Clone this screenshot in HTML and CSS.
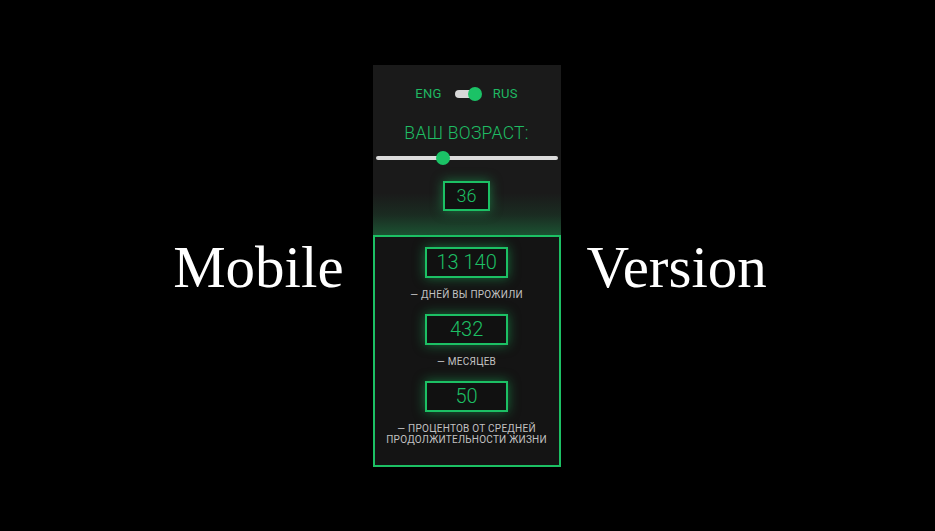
FILE: index.html
```html
<!DOCTYPE html>
<html lang="ru">
<head>
<meta charset="utf-8">
<title>Mobile Version</title>
<link rel="stylesheet" href="styles.css">
</head>
<body>
<main class="stage">
  <span class="caption caption-left">Mobile</span>
  <div class="phone">
    <section class="settings">
      <div class="lang">
        <span class="lang-label">ENG</span>
        <span class="switch"><span class="switch-track"></span><span class="switch-knob"></span></span>
        <span class="lang-label">RUS</span>
      </div>
      <h1 class="title">ВАШ ВОЗРАСТ:</h1>
      <div class="slider"><span class="slider-track"></span><span class="slider-thumb"></span></div>
      <div class="box box-age">36</div>
    </section>
    <section class="results">
      <div class="result">
        <div class="box box-wide">13 140</div>
        <p class="label">— ДНЕЙ ВЫ ПРОЖИЛИ</p>
      </div>
      <div class="result">
        <div class="box box-wide">432</div>
        <p class="label">— МЕСЯЦЕВ</p>
      </div>
      <div class="result">
        <div class="box box-wide">50</div>
        <p class="label">— ПРОЦЕНТОВ ОТ СРЕДНЕЙ<br>ПРОДОЛЖИТЕЛЬНОСТИ ЖИЗНИ</p>
      </div>
    </section>
  </div>
  <span class="caption caption-right">Version</span>
</main>
</body>
</html>
```
FILE: styles.css
```css
html, body {
  margin: 0;
  padding: 0;
  background: #000;
}
.stage {
  width: 935px;
  height: 531px;
  box-sizing: border-box;
  padding-left: 5px;
  display: flex;
  align-items: center;
  justify-content: center;
}
.caption {
  font-family: "Liberation Serif", "Times New Roman", serif;
  font-size: 59px;
  color: #fff;
  line-height: 1;
  padding-top: 3px;
}
.caption-left { margin-right: 29px; }
.caption-right { margin-left: 26px; }
.phone {
  width: 188px;
  height: 402px;
  background: #1a1a1a;
  display: flex;
  flex-direction: column;
  font-family: Roboto, "Noto Sans", sans-serif;
}
.settings {
  height: 170px;
  display: flex;
  flex-direction: column;
  align-items: center;
  box-sizing: border-box;
  padding-top: 22px;
  background: linear-gradient(to bottom, rgba(30, 200, 100, 0) 0, rgba(30, 200, 100, 0) 128px, rgba(30, 200, 100, 0.1) 150px, rgba(30, 200, 100, 0.32) 170px);
}
.lang {
  display: flex;
  align-items: center;
  height: 14px;
  gap: 12px;
}
.lang-label {
  font-size: 13px;
  color: #1fb862;
  letter-spacing: 0.3px;
}
.switch {
  position: relative;
  width: 27px;
  height: 14px;
}
.switch-track {
  position: absolute;
  left: 1px;
  top: 3px;
  width: 22px;
  height: 8px;
  border-radius: 4px;
  background: #d8d8d8;
}
.switch-knob {
  position: absolute;
  right: -1px;
  top: 0;
  width: 14px;
  height: 14px;
  border-radius: 50%;
  background: #1bc266;
}
.title {
  margin: 22px 0 0;
  font-size: 17.5px;
  font-weight: 300;
  line-height: 20px;
  color: #1fbd64;
  letter-spacing: 0.3px;
}
.slider {
  position: relative;
  width: 182px;
  height: 14px;
  margin-top: 8px;
}
.slider-track {
  position: absolute;
  left: 0;
  right: 0;
  top: 5px;
  height: 4px;
  border-radius: 2px;
  background: #dcdcdc;
}
.slider-thumb {
  position: absolute;
  left: 60px;
  top: 0;
  width: 14px;
  height: 14px;
  border-radius: 50%;
  background: #1bc266;
}
.box {
  box-sizing: border-box;
  border: 2px solid #1cc064;
  background: #111;
  color: #1dbf64;
  font-weight: 300;
  display: flex;
  align-items: center;
  justify-content: center;
  box-shadow: 0 0 12px rgba(28, 200, 100, 0.5);
}
.box-age {
  margin-top: 16px;
  width: 47px;
  height: 30px;
  font-size: 18px;
}
.results {
  flex: 1;
  box-sizing: border-box;
  border: 2px solid #1cc064;
  background: #141414;
  padding-top: 10px;
  display: flex;
  flex-direction: column;
  align-items: center;
  gap: 14px;
}
.result {
  display: flex;
  flex-direction: column;
  align-items: center;
}
.box-wide {
  width: 83px;
  height: 31px;
  font-size: 20px;
}
.label {
  margin: 11px 0 0;
  font-size: 10px;
  font-weight: 400;
  line-height: 11px;
  color: #c2c2c2;
  text-align: center;
  letter-spacing: 0.25px;
}
```
